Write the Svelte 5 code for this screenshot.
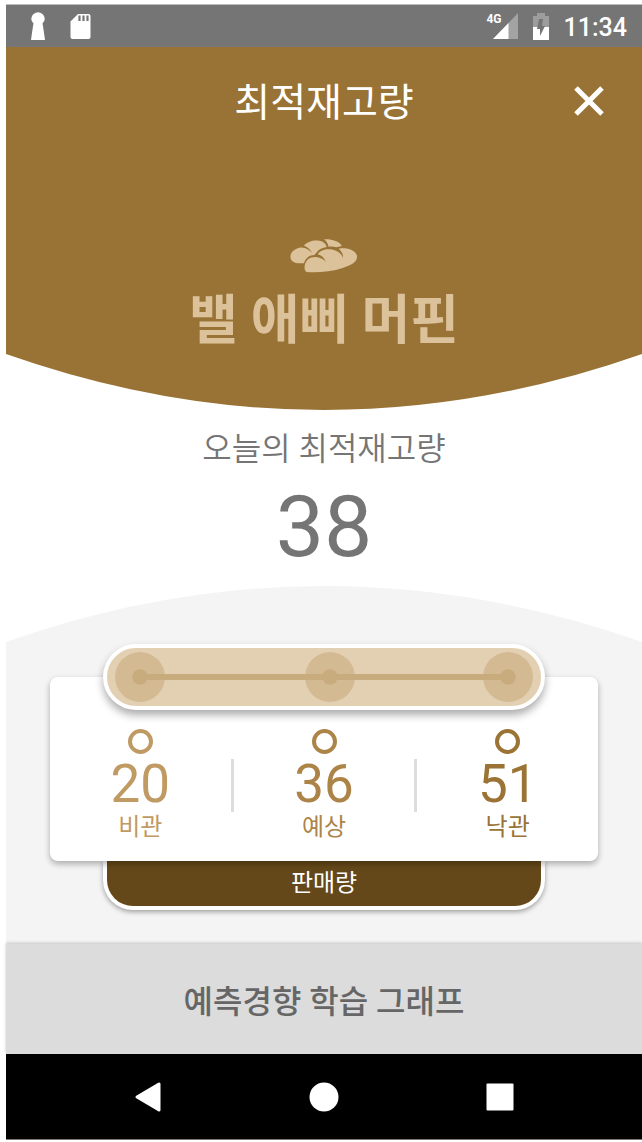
<script>
  const forecasts = [
    { value: 20, label: '비관', tone: 'low' },
    { value: 36, label: '예상', tone: 'mid' },
    { value: 51, label: '낙관', tone: 'high' }
  ];
  const min = forecasts[0].value;
  const range = forecasts[2].value - min;
</script>

<div class="screen">
  <div class="status">
    <div class="group">
      <svg width="16" height="30" viewBox="0 0 16 30" fill="#fff"><path d="M3.500 3Q8 -.5 12.500 3Q17 7.500 12.500 12.500L13 15L15 29H1L3 15L3.500 12.500Q-1 7.500 3.500 3Z" /></svg>
      <svg width="21" height="27" viewBox="0 0 21 27"><path d="M8 1H18.500Q20.500 1 20.500 3V24Q20.500 26 18.500 26H2.500Q.5 26 .5 24V8.500Z" fill="#fff" /><path d="M9.500 2.500V8M13.500 2.500V8M17.500 2.500V8" stroke="#757575" stroke-width="2.200" /></svg>
    </div>
    <div class="group right">
      <span class="signal"><span class="net">4G</span><svg width="25" height="26" viewBox="0 0 25 26"><path d="M25 0V26H0Z" fill="#a3a3a3" /><path d="M15.500 10V26H0Z" fill="#fff" /></svg></span>
      <svg width="16" height="27" viewBox="0 0 16 27"><path d="M0 3H4V0H12V3H16V14H0Z" fill="#9d9d9d" /><path d="M0 14H16V27H0Z" fill="#fff" /><path d="M10 6H6L4 16H7V23L12 13H9Z" fill="#757575" /></svg>
      <span class="clock">11:34</span>
    </div>
  </div>

  <header>
    <h1>최적재고량</h1>
    <button class="close" aria-label="닫기"><svg width="30" height="30" viewBox="0 0 30 30"><path d="M2 2L28 28M28 2L2 28" stroke="#fff" stroke-width="5" /></svg></button>
  </header>

  <section class="product">
    <svg width="68" height="34" viewBox="0 0 204 102" fill="#dcc29a">
      <path d="M28 73C-3 72 -3 48 8 37C20 25 34 23 44 27C54 30 61 37 66 41C62 33 54 24 42 20C50 8 72 2 88 5C101 7 108 14 110 24C98 26 87 30 79 41L73 48C58 48 46 58 42 73Z" />
      <path d="M102 1C120 -1 148 5 156 21L139 25C132 22 124 22 116 23C113 12 109 6 102 1Z" />
      <path d="M50 99C40 94 42 72 54 61C68 50 92 52 107 68C103 56 94 49 83 46C91 32 112 28 129 32C145 36 156 46 159 57C160 44 154 36 146 29C168 24 196 32 201 50C204 70 180 80 158 87C125 98 80 102 50 99Z" />
    </svg>
    <h2>밸 애삐 머핀</h2>
  </section>
  <svg class="curve" viewBox="0 0 636 56" preserveAspectRatio="none"><path d="M0 0Q318 112 636 0Z" fill="#997335" /></svg>

  <section class="today">
    <p>오늘의 최적재고량</p>
    <strong>38</strong>
  </section>

  <svg class="curve" viewBox="0 0 636 56" preserveAspectRatio="none"><path d="M0 56Q318 -56 636 56Z" fill="#f4f4f4" /></svg>
  <section class="forecast">
    <div class="card">
      <div class="pill">
        <div class="track">
          {#each forecasts as f}
            <span class="stop" style="left: {((f.value - min) / range) * 100}%"></span>
          {/each}
        </div>
      </div>
      <div class="columns">
        {#each forecasts as f, i}
          {#if i > 0}<span class="divider"></span>{/if}
          <div class="column {f.tone}">
            <span class="ring"></span>
            <span class="value">{f.value}</span>
            <span class="label">{f.label}</span>
          </div>
        {/each}
      </div>
    </div>
    <div class="tab">판매량</div>
  </section>

  <button class="graph">예측경향 학습 그래프</button>

  <nav>
    <button aria-label="뒤로"><svg width="28" height="32" viewBox="0 0 28 32"><path d="M3 16L25 3V29Z" fill="#fff" stroke="#fff" stroke-width="3" stroke-linejoin="round" /></svg></button>
    <button aria-label="홈"><svg width="30" height="30" viewBox="0 0 30 30"><circle cx="15" cy="15" r="14.500" fill="#fff" /></svg></button>
    <button aria-label="최근 앱"><svg width="28" height="28" viewBox="0 0 28 28"><rect x=".5" y=".5" width="27" height="27" rx="1" fill="#fff" /></svg></button>
  </nav>
</div>

<style>
  :global(body) {
    margin: 0;
    background: #fff;
  }
  .screen {
    display: flex;
    flex-direction: column;
    margin: 4px 0 0 6px;
    font-family: Roboto, 'Noto Sans CJK KR', sans-serif;
    background: #fff;
  }
  svg {
    display: block;
    flex: none;
  }
  h1, h2, p {
    margin: 0;
  }
  button {
    display: flex;
    align-items: center;
    justify-content: center;
    margin: 0;
    padding: 0;
    border: 0;
    background: none;
    font-family: inherit;
    cursor: pointer;
  }
  .status {
    display: flex;
    align-items: center;
    justify-content: space-between;
    height: 42px;
    padding: 0 15px 0 24px;
    border-top: 1px solid #bcbcbc;
    background: #757575;
    color: #fff;
  }
  .group {
    display: flex;
    align-items: center;
    gap: 24px;
  }
  .right {
    gap: 15px;
  }
  .signal {
    display: flex;
    align-items: flex-start;
  }
  .net {
    margin-right: -9px;
    font-size: 12px;
    font-weight: 700;
    line-height: 12px;
  }
  .clock {
    padding-top: 4px;
    font-size: 25px;
    font-weight: 500;
    line-height: 28px;
  }
  header {
    display: grid;
    grid-template-columns: 1fr auto 1fr;
    align-items: center;
    height: 100px;
    padding: 4px 38px 0;
    background: #997335;
    color: #fff;
  }
  h1 {
    grid-column: 2;
    padding-top: 4px;
    font-size: 39px;
    font-weight: 400;
    line-height: 48px;
  }
  .close {
    justify-self: end;
  }
  .product {
    display: flex;
    flex-direction: column;
    align-items: center;
    gap: 18px;
    padding: 88px 0 3px;
    background: #997335;
    color: #dcc29a;
  }
  h2 {
    font-size: 53px;
    font-weight: 700;
    line-height: 60px;
  }
  .curve {
    width: 100%;
    height: 56px;
  }
  .today {
    display: flex;
    flex-direction: column;
    align-items: center;
    gap: 8px;
    padding: 19px 0 9px;
    color: #757575;
  }
  .today p {
    font-size: 32px;
    font-weight: 350;
    line-height: 40px;
  }
  .today strong {
    font-size: 86px;
    font-weight: 400;
    line-height: 100px;
  }
  .forecast {
    padding: 35px 44px 34px;
    background: #f4f4f4;
  }
  .card {
    position: relative;
    z-index: 1;
    padding-bottom: 20px;
    border-radius: 8px;
    background: #fff;
    box-shadow: 0 3px 6px rgba(0, 0, 0, 0.3);
  }
  .pill {
    box-sizing: border-box;
    display: flex;
    align-items: center;
    height: 66px;
    margin: 0 53px;
    padding: 0 33px;
    border: 4px solid #fff;
    border-radius: 33px;
    background: #e3d0b2;
    box-shadow: 0 5px 9px rgba(0, 0, 0, 0.33);
    transform: translateY(-50%);
    margin-bottom: -14px;
  }
  .track {
    position: relative;
    flex: 1;
    height: 6px;
    background: #c9ac7e;
  }
  .stop {
    position: absolute;
    top: 50%;
    width: 16px;
    height: 16px;
    border: 17px solid rgba(201, 172, 126, 0.6);
    border-radius: 50%;
    background: #c9ac7e;
    background-clip: padding-box;
    transform: translate(-50%, -50%);
  }
  .columns {
    display: flex;
    align-items: center;
  }
  .column {
    display: flex;
    flex: 1;
    flex-direction: column;
    align-items: center;
  }
  .low {
    color: #bf9a62;
  }
  .mid {
    color: #ad8448;
  }
  .high {
    color: #9a7335;
  }
  .ring {
    box-sizing: border-box;
    width: 25px;
    height: 25px;
    border: 4px solid;
    border-radius: 50%;
  }
  .value {
    margin-top: 5px;
    font-size: 53px;
    line-height: 50px;
  }
  .label {
    margin-top: 4px;
    font-size: 24px;
    line-height: 28px;
  }
  .divider {
    width: 3px;
    height: 53px;
    background: #dcdcdc;
  }
  .tab {
    margin: 0 53px;
    padding: 3px 0 4px;
    border: 4px solid #fff;
    border-top: 0;
    border-radius: 0 0 30px 30px;
    background: #644819;
    box-shadow: 0 2px 5px rgba(0, 0, 0, 0.35);
    color: #fff;
    font-size: 24px;
    line-height: 38px;
    text-align: center;
  }
  .graph {
    height: 110px;
    padding-top: 5px;
    background: #dcdcdc;
    box-shadow: 0 -1px 3px rgba(0, 0, 0, 0.2);
    color: #666;
    font-size: 32px;
    font-weight: 500;
    line-height: 40px;
  }
  nav {
    display: flex;
    justify-content: center;
    gap: 80px;
    border-bottom: 1px solid #777;
    background: #000;
  }
  nav button {
    width: 96px;
    height: 85px;
  }
</style>
